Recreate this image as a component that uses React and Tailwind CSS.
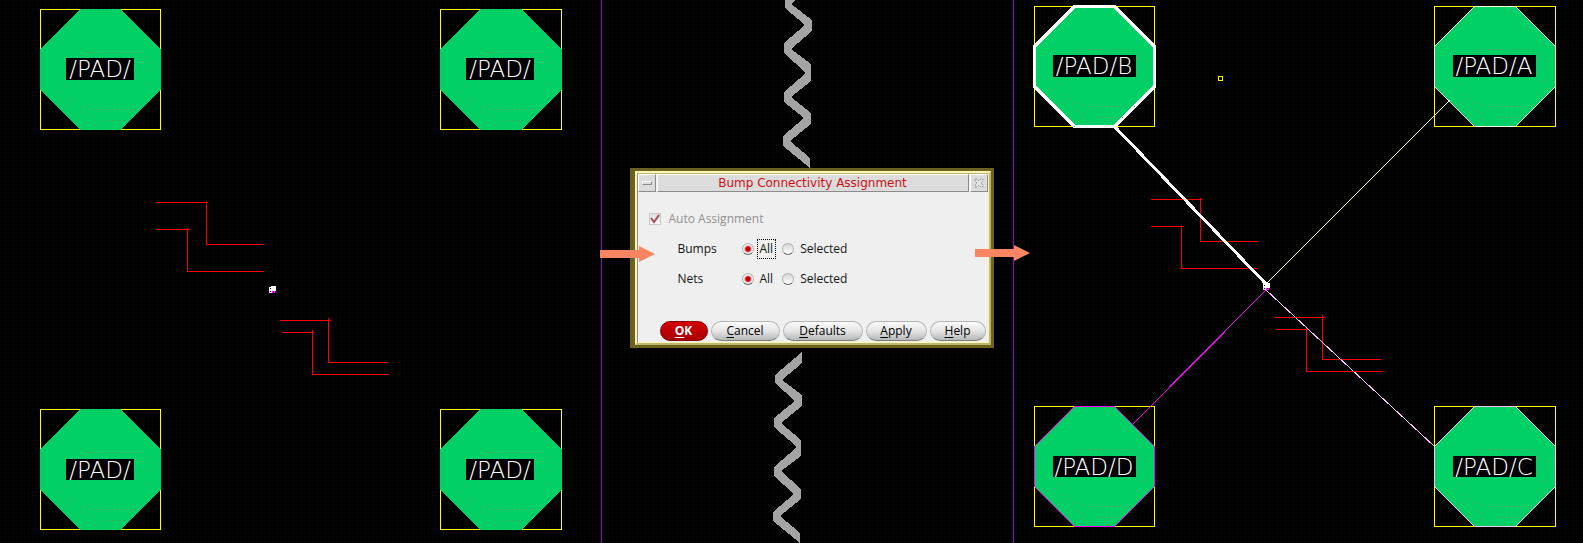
import React from "react";

const SPECKLES = [
  [41, 46], [107, 47], [103, 52], [108, 61], [113, 54], [109, 74],
  [24, 77], [21, 82], [28, 89], [35, 92], [27, 97], [42, 97], [48, 98],
  [41, 104], [49, 107], [46, 113], [54, 116],
  ...Array.from({ length: 12 }, (_, i) => [44 + i * 5, 43]),
  ...Array.from({ length: 10 }, (_, i) => [55 + i * 5, 100]),
  ...Array.from({ length: 6 }, (_, i) => [63 + i * 5, 111]),
];

function Pad({ x, y, label, width = 120, labelY = 49, outline, outlineWidth = 1 }) {
  const boxWidth = label.length > 5 ? 83 : 68;
  const w = width;
  const corners = `40.5,0.5 ${w - 39.5},0.5 ${w + 0.5},40.5 ${w + 0.5},80.5 ${w - 39.5},120.5 40.5,120.5 0.5,80.5 0.5,40.5`;
  return (
    <g transform={`translate(${x} ${y})`}>
      <rect x="0.5" y="0.5" width={w} height="120" fill="none" stroke="#ffff00" shapeRendering="crispEdges" />
      <polygon
        points={`40,0 ${w - 40},0 ${w + 1},40 ${w + 1},80 ${w - 39},121 40,121 0,80 0,40`}
        fill="#00d066"
        shapeRendering="crispEdges"
      />
      {outline && <polygon points={corners} fill="none" stroke={outline} strokeWidth={outlineWidth} shapeRendering="crispEdges" />}
      {SPECKLES.map(([sx, sy], i) => (
        <rect key={i} x={sx} y={sy} width="1" height="1" fill="#8f7468" />
      ))}
      <rect x={Math.round(60 - boxWidth / 2)} y={labelY} width={boxWidth} height={71 - labelY} fill="#000000" />
      <text
        x="60"
        y={labelY + 19}
        textAnchor="middle"
        fill="#ffffff"
        className="font-['DejaVu_Sans_Light','DejaVu_Sans',sans-serif] text-[23px] font-extralight"
      >
        {label}
      </text>
    </g>
  );
}

function Routes() {
  return (
    <g fill="none" stroke="#ff0000" shapeRendering="crispEdges">
      <path d="M157 202.5H208M206.5 201V244.5H264" />
      <path d="M157 229.5H190M187.5 228V271.5H264" />
      <path d="M280 320.5H331M328.5 318V362.5H387" />
      <path d="M282 332.5H314M312.5 330V374.5H389" />
    </g>
  );
}

function Origin() {
  return (
    <g shapeRendering="crispEdges">
      <rect x="269" y="287" width="3" height="3" fill="#fffff0" />
      <rect x="269" y="290" width="3" height="3" fill="#ffc8ff" />
      <rect x="272" y="291" width="3" height="2" fill="#ff00ff" />
      <rect x="271" y="286" width="5" height="5" fill="#ffffff" />
      <rect x="270" y="288" width="1" height="1" fill="#000000" />
      <rect x="270" y="291" width="1" height="1" fill="#000000" />
      <rect x="273" y="291" width="1" height="1" fill="#000000" />
    </g>
  );
}

function BeforeView() {
  return (
    <svg viewBox="0 0 601 543" className="block h-auto w-full" role="img" aria-label="Unassigned bumps">
      <Pad x={40} y={9} label="/PAD/" />
      <Pad x={440} y={9} width={121} label="/PAD/" />
      <Pad x={40} y={409} labelY={50} label="/PAD/" />
      <Pad x={440} y={409} width={121} labelY={50} label="/PAD/" />
      <Routes />
      <Origin />
    </svg>
  );
}

function AfterView() {
  return (
    <svg viewBox="1014 0 569 543" className="block h-auto w-full" role="img" aria-label="Assigned bumps">
      <Pad x={1034} y={6} label="/PAD/B" outline="#ffffff" outlineWidth={3} />
      <Pad x={1434} y={6} width={121} label="/PAD/A" outline="#ffffdc" />
      <Pad x={1034} y={406} labelY={50} label="/PAD/D" outline="#ff00ff" />
      <Pad x={1434} y={406} width={121} labelY={50} label="/PAD/C" outline="#ffc8ff" />
      <rect x="1218.5" y="76.5" width="4" height="4" fill="none" stroke="#ffff00" shapeRendering="crispEdges" />
      <g transform="translate(994 -3)">
        <Routes />
      </g>
      <g fill="none" shapeRendering="crispEdges">
        <path d="M1115 127L1267 285" stroke="#ffffff" strokeWidth="3" />
        <path d="M1449 101L1267 283" stroke="#ffffc0" />
        <path d="M1133 424L1266 290" stroke="#ff00ff" />
        <path d="M1266 290L1434 446" stroke="#ffc0ff" />
      </g>
      <rect x="1448" y="100" width="2" height="2" fill="#ffffff" />
      <g transform="translate(994 -3)">
        <Origin />
      </g>
    </svg>
  );
}

function Arrow({ className }) {
  return (
    <svg viewBox="0 0 55 16" className={`pointer-events-none absolute h-4 w-[55px] ${className}`} aria-hidden="true">
      <path d="M0 4H39V0L55 8L39 16V12H0Z" fill="#fa8562" />
    </svg>
  );
}

const RAISED = "border border-t-white border-l-white border-r-[#8c8c8c] border-b-[#8c8c8c] bg-[#dcdcdc]";

function TitleBar() {
  return (
    <header className="flex h-[18px] items-stretch gap-px">
      <button type="button" aria-label="Minimize" className={`flex w-[18px] items-center justify-center ${RAISED}`}>
        <span className="h-[4px] w-[10px] border border-t-white border-l-white border-r-[#8c8c8c] border-b-[#8c8c8c]" />
      </button>
      <h1 className={`flex flex-1 items-center justify-center font-['DejaVu_Sans',sans-serif] text-[12px] leading-4 text-[#cc1016] ${RAISED}`}>
        Bump Connectivity Assignment
      </h1>
      <button type="button" aria-label="Close" className={`flex w-[18px] items-center justify-center ${RAISED}`}>
        <svg viewBox="0 0 10 10" className="size-[10px]" aria-hidden="true">
          <path d="M1 1H3L5 3L7 1H9V3L7 5L9 7V9H7L5 7L3 9H1V7L3 5L1 3Z" fill="#e4e4e4" stroke="#949494" strokeDasharray="2 1" />
        </svg>
      </button>
    </header>
  );
}

function Radio({ name, value, label, checked, focused }) {
  return (
    <label className="flex items-center gap-[3px]">
      <input
        type="radio"
        name={name}
        value={value}
        defaultChecked={checked}
        className="size-3 appearance-none rounded-full border border-[#b4b4b4] border-b-[#6c6c6c] bg-[linear-gradient(#d6d6d6,#ffffff)] checked:bg-[radial-gradient(circle,#cc0000_2px,#f4f4f4_4px)]"
      />
      <span className={`border px-[2px] leading-[18px] ${focused ? "border-dotted border-black" : "border-transparent"}`}>{label}</span>
    </label>
  );
}

function ScopeRow({ legend, name, focused }) {
  return (
    <div role="radiogroup" aria-label={legend} className="flex h-[30px] items-center">
      <span className="w-[64px]">{legend}</span>
      <div className="flex gap-[6px]">
        <Radio name={name} value="all" label="All" checked focused={focused} />
        <Radio name={name} value="selected" label="Selected" />
      </div>
    </div>
  );
}

function DialogButton({ label, primary, className }) {
  const look = primary
    ? "border-[#8c0000] bg-[linear-gradient(#d40000,#a80000)] font-bold text-white"
    : "border-[#b4b4b4] border-b-[#7c7c7c] bg-[linear-gradient(#fafafa,#e4e4e4_50%,#b8b8b8)] text-black";
  return (
    <button type="button" className={`flex h-5 items-center justify-center rounded-full border leading-4 ${look} ${className}`}>
      <span>
        <span className="underline underline-offset-2">{label[0]}</span>
        {label.slice(1)}
      </span>
    </button>
  );
}

function AssignmentDialog() {
  return (
    <section role="dialog" aria-label="Bump Connectivity Assignment" className="relative w-[364px] border-[3px] border-l-[5px] border-[#6b6221]">
      <div className="border-2 border-t-[#fbf4b4] border-r-[#bdb76b] border-b-[#bdb76b] border-l-[#fbf4b4]">
        <div className="border border-t-[#bdb76b] border-r-[#fbf4b4] border-b-[#fbf4b4] border-l-[#8c8c8c] bg-[#efefef] font-['Open_Sans','Noto_Sans',sans-serif] text-[12px] text-[#141414]">
          <TitleBar />
          <form className="flex flex-col px-[2px] pb-px">
            <label className="mt-[19px] flex items-center gap-2 pl-[9px] leading-4 text-[#8f8f8f]">
              <span className="grid size-3 place-items-center">
                <input type="checkbox" defaultChecked disabled className="col-start-1 row-start-1 size-3 appearance-none border border-[#d0c8c8] bg-[linear-gradient(#dedede,#f8f8f8)]" />
                <svg viewBox="0 0 12 12" className="pointer-events-none col-start-1 row-start-1 size-3" aria-hidden="true">
                  <path d="M2 5L5 9L10 2" fill="none" stroke="#a05058" strokeWidth="2" />
                </svg>
              </span>
              Auto Assignment
            </label>
            <div className="mt-[7px] pl-[38px]">
              <ScopeRow legend="Bumps" name="bumps" focused />
              <ScopeRow legend="Nets" name="nets" />
            </div>
            <div className="mt-[27px] flex justify-end gap-[3px]">
              <DialogButton label="OK" primary className="w-[48px]" />
              <DialogButton label="Cancel" className="w-[69px]" />
              <DialogButton label="Defaults" className="w-[80px]" />
              <DialogButton label="Apply" className="w-[61px]" />
              <DialogButton label="Help" className="w-[56px]" />
            </div>
          </form>
        </div>
      </div>
      <Arrow className="-left-[35px] top-[75px]" />
      <Arrow className="-right-[39px] top-[74px]" />
    </section>
  );
}

export default function App() {
  return (
    <main className="grid min-h-screen grid-cols-[602fr_411fr_570fr] bg-black bg-[radial-gradient(circle_at_0_0,#0e0e0e_1px,transparent_1px)] bg-[size:4px_4px]">
      <div className="border-r border-[#9400d3]">
        <BeforeView />
      </div>
      <div className="z-10 flex min-w-0 flex-col">
        <svg viewBox="602 0 411 168" className="block h-auto w-full" aria-hidden="true">
          <polygon
            points="796,0 791,4 812,20 812,31 791,49 811,64 811,81 791,97 811,113 811,124 790,141 810,158 810,168 783,146 783,136 804,118 784,102 784,92 806,73 784,53 784,43 805,25 785,8 785,0"
            fill="#a4a4a4"
            shapeRendering="crispEdges"
          />
        </svg>
        <div className="flex justify-center pl-2">
          <AssignmentDialog />
        </div>
        <svg viewBox="602 348 411 195" className="block h-auto w-full" aria-hidden="true">
          <polygon
            points="802,352 802,363 782,380 802,395 802,406 781,423 801,440 801,456 781,471 801,489 801,499 780,516 800,533 800,543 773,521 773,512 794,494 774,476 774,467 797,447 774,427 774,418 795,401 775,383 775,375"
            fill="#a4a4a4"
            shapeRendering="crispEdges"
          />
        </svg>
      </div>
      <div className="border-l border-[#9400d3]">
        <AfterView />
      </div>
    </main>
  );
}
